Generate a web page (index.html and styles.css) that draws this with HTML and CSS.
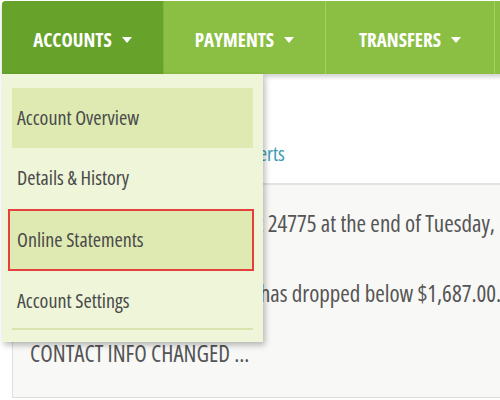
FILE: index.html
```html
<!DOCTYPE html>
<html>
<head>
  <title>Accounts</title>
  <link rel="stylesheet" href="styles.css">
</head>
<body>
  <div class="nav">
    <a class="nav-tab active" href="#">ACCOUNTS</a>
    <a class="nav-tab" href="#">PAYMENTS</a>
    <a class="nav-tab wide" href="#">TRANSFERS</a>
    <a class="nav-tab" href="#">SERVICES</a>
  </div>

  <div class="menu">
    <a class="menu-item current" href="#">Account Overview</a>
    <a class="menu-item" href="#">Details &amp; History</a>
    <a class="menu-item selected" href="#">Online Statements</a>
    <a class="menu-item last" href="#">Account Settings</a>
    <div class="menu-divider"></div>
  </div>

  <div class="page">
    <div class="sub-links">
      <a href="#">Summary</a>
      <a href="#">Alerts</a>
    </div>

    <div class="panel">
      <div class="alert">Your new balance for account 24775 at the end of Tuesday, November 14</div>
      <div class="alert">The balance on your account has dropped below $1,687.00.</div>
      <div class="alert">CONTACT INFO CHANGED ...</div>
    </div>
  </div>
</body>
</html>
```

FILE: styles.css
```css
body {
  margin: 0;
  background: #fff;
  font-family: "Open Sans", sans-serif;
  font-stretch: 75%;
  color: #555;
  overflow: hidden;
}

a {
  text-decoration: none;
}

/* top navigation */
.nav {
  display: flex;
  margin: 1px 0 0 2px;
  height: 73px;
  width: 700px;
  background: #8bbf44;
  border-top-left-radius: 4px;
  box-shadow: 0 3px 4px rgba(0, 0, 0, 0.18);
}

.nav-tab {
  display: flex;
  align-items: center;
  justify-content: center;
  width: 162px;
  padding-top: 4px;
  box-sizing: border-box;
  border-right: 1px solid #a3cf63;
  color: #fff;
  font-weight: bold;
  font-size: 19px;
}

.nav-tab.wide {
  width: 169px;
}

.nav-tab.active {
  background: #67a32a;
  border-top-left-radius: 4px;
  border-right-color: #7fb43f;
}

.nav-tab::after {
  content: "";
  margin-left: 10px;
  border-left: 5px solid transparent;
  border-right: 5px solid transparent;
  border-top: 6px solid #fff;
}

/* dropdown */
.menu {
  position: absolute;
  top: 74px;
  left: 2px;
  width: 261px;
  box-sizing: border-box;
  padding: 14px 10px 12px 10px;
  background: #eef5d8;
  box-shadow: 2px 3px 6px rgba(0, 0, 0, 0.28);
  z-index: 2;
}

.menu-item {
  display: block;
  height: 60px;
  line-height: 60px;
  padding-left: 5px;
  color: #4a4a4a;
  font-size: 20px;
}

.menu-item.current {
  background: #dfeab3;
}

.menu-item.selected {
  margin: 1px -1px 0 -4px;
  height: 62px;
  line-height: 58px;
  padding-left: 7px;
  box-sizing: border-box;
  border: 2px solid #e5403b;
  background: #dfeab3;
}

.menu-item.last {
  height: 57px;
}

.menu-divider {
  height: 2px;
  background: #d8e4ad;
}

/* page body */
.page {
  padding-left: 12px;
}

.sub-links {
  display: flex;
  gap: 18px;
  height: 109px;
  padding-left: 150px;
  align-items: flex-end;
  box-sizing: border-box;
  padding-bottom: 16px;
  font-size: 20px;
}

.sub-links a {
  color: #3a9bb4;
}

.panel {
  border-top: 2px solid #e2e2e2;
  border-left: 1px solid #ddd;
  border-bottom: 1px solid #ddd;
  background: #f8f8f6;
  padding: 8px 0 14px 17px;
  font-size: 23px;
  white-space: nowrap;
}

.alert {
  height: 60px;
  line-height: 60px;
}

.alert:first-child {
  margin-bottom: 10px;
}
```
